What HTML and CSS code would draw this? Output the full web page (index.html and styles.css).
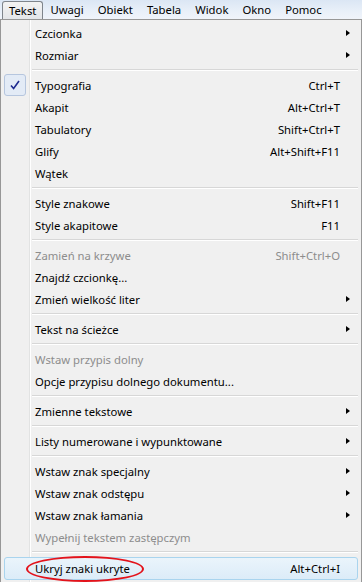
FILE: index.html
```html
<!DOCTYPE html>
<html lang="pl">
<head>
  <meta charset="UTF-8" />
  <meta name="viewport" content="width=device-width, initial-scale=1.0" />
  <title>Menu Tekst</title>
  <link rel="stylesheet" href="styles.css">
</head>
<body>
  <div class="menubar">
    <span class="top open">Tekst</span>
    <span class="top">Uwagi</span>
    <span class="top">Obiekt</span>
    <span class="top">Tabela</span>
    <span class="top">Widok</span>
    <span class="top">Okno</span>
    <span class="top">Pomoc</span>
  </div>

  <div class="menu">
    <div class="item"><span class="gut"></span><span class="label">Czcionka</span><span class="key"></span><span class="sub"></span></div>
    <div class="item"><span class="gut"></span><span class="label">Rozmiar</span><span class="key"></span><span class="sub"></span></div>
    <div class="sep"></div>

    <div class="item">
      <span class="gut"><span class="check"><svg width="12" height="12" viewBox="0 0 12 12"><path d="M2 6.5 L4.6 9.5 L10 2" fill="none" stroke="#1d2a8f" stroke-width="1.6"/></svg></span></span>
      <span class="label">Typografia</span><span class="key">Ctrl+T</span><span class="nosub"></span>
    </div>
    <div class="item"><span class="gut"></span><span class="label">Akapit</span><span class="key">Alt+Ctrl+T</span><span class="nosub"></span></div>
    <div class="item"><span class="gut"></span><span class="label">Tabulatory</span><span class="key">Shift+Ctrl+T</span><span class="nosub"></span></div>
    <div class="item"><span class="gut"></span><span class="label">Glify</span><span class="key">Alt+Shift+F11</span><span class="nosub"></span></div>
    <div class="item"><span class="gut"></span><span class="label">Wątek</span><span class="key"></span><span class="nosub"></span></div>
    <div class="sep"></div>

    <div class="item"><span class="gut"></span><span class="label">Style znakowe</span><span class="key">Shift+F11</span><span class="nosub"></span></div>
    <div class="item"><span class="gut"></span><span class="label">Style akapitowe</span><span class="key">F11</span><span class="nosub"></span></div>
    <div class="sep"></div>

    <div class="item off"><span class="gut"></span><span class="label">Zamień na krzywe</span><span class="key">Shift+Ctrl+O</span><span class="nosub"></span></div>
    <div class="item"><span class="gut"></span><span class="label">Znajdź czcionkę...</span><span class="key"></span><span class="nosub"></span></div>
    <div class="item"><span class="gut"></span><span class="label">Zmień wielkość liter</span><span class="key"></span><span class="sub"></span></div>
    <div class="sep"></div>

    <div class="item"><span class="gut"></span><span class="label">Tekst na ścieżce</span><span class="key"></span><span class="sub"></span></div>
    <div class="sep"></div>

    <div class="item off"><span class="gut"></span><span class="label">Wstaw przypis dolny</span><span class="key"></span><span class="nosub"></span></div>
    <div class="item"><span class="gut"></span><span class="label">Opcje przypisu dolnego dokumentu...</span><span class="key"></span><span class="nosub"></span></div>
    <div class="sep"></div>

    <div class="item"><span class="gut"></span><span class="label">Zmienne tekstowe</span><span class="key"></span><span class="sub"></span></div>
    <div class="sep"></div>

    <div class="item"><span class="gut"></span><span class="label">Listy numerowane i wypunktowane</span><span class="key"></span><span class="sub"></span></div>
    <div class="sep"></div>

    <div class="item"><span class="gut"></span><span class="label">Wstaw znak specjalny</span><span class="key"></span><span class="sub"></span></div>
    <div class="item"><span class="gut"></span><span class="label">Wstaw znak odstępu</span><span class="key"></span><span class="sub"></span></div>
    <div class="item"><span class="gut"></span><span class="label">Wstaw znak łamania</span><span class="key"></span><span class="sub"></span></div>
    <div class="item off"><span class="gut"></span><span class="label">Wypełnij tekstem zastępczym</span><span class="key"></span><span class="nosub"></span></div>
    <div class="sep"></div>

    <div class="item hot">
      <span class="gut"></span><span class="label">Ukryj znaki ukryte</span><span class="key">Alt+Ctrl+I</span><span class="nosub"></span>
      <span class="ring"></span>
    </div>
  </div>
</body>
</html>
```

FILE: styles.css
```css
body {
  margin: 0;
  background: #fff;
  font-family: 'Segoe UI', 'Noto Sans', sans-serif;
  font-size: 11.3px;
  color: #000;
  width: 362px;
  height: 582px;
  overflow: hidden;
}

.menubar {
  height: 19px;
  display: flex;
  align-items: stretch;
  padding-left: 2px;
  background: linear-gradient(#dbe6f4, #e9f0f9 60%, #f0f4fa);
}

.top {
  display: flex;
  align-items: center;
  padding: 0 6px;
  border: 1px solid transparent;
}

.top.open {
  border: 1px solid #7f858c;
  border-bottom: none;
  border-radius: 3px 3px 0 0;
  background: linear-gradient(#f3f3f3, #e4e6e9);
  margin-top: 1px;
}

.menu {
  position: relative;
  border: 1px solid #979797;
  border-bottom: none;
  padding: 2px 2px 0;
  background:
    linear-gradient(to right, #f0f0f0 28px, #e2e3e3 28px, #e2e3e3 29px, #fff 29px, #fff 30px, #f0f0f0 30px);
  height: 562px;
}

.item {
  position: relative;
  display: flex;
  align-items: center;
  height: 22px;
  white-space: nowrap;
}

.gut {
  width: 32px;
  flex: none;
  display: flex;
  align-items: center;
}

.check {
  width: 20px;
  height: 20px;
  margin-left: 1px;
  border: 1px solid #b6c6de;
  border-radius: 3px;
  background: #e3ebf6;
  display: flex;
  align-items: center;
  justify-content: center;
}

.label {
  flex: 1;
}

.key {
  text-align: right;
}

.sub, .nosub {
  width: 19px;
  flex: none;
  display: flex;
  align-items: center;
  justify-content: flex-start;
}

.sub::before {
  content: "";
  border-left: 4px solid #000;
  border-top: 3.5px solid transparent;
  border-bottom: 3.5px solid transparent;
  margin-left: 6px;
}

.off {
  color: #8d8d8d;
}

.sep {
  height: 8px;
  margin-left: 29px;
  margin-right: 1px;
  display: flex;
  align-items: center;
}

.sep::before {
  content: "";
  flex: 1;
  height: 1px;
  border-top: 1px solid #d7d7d7;
  background: #fff;
}

.hot {
  margin-top: 1px;
  height: 21px;
  border: 1px solid #a9d4ee;
  border-radius: 3px;
  background: linear-gradient(#eaf4fb, #dcecf8);
  margin-left: 1px;
  margin-right: 1px;
}

.hot .gut {
  width: 30px;
}

.hot .nosub {
  width: 17px;
}

.ring {
  position: absolute;
  left: 21px;
  top: -2px;
  width: 114px;
  height: 22px;
  border: 2px solid #e3131b;
  border-radius: 50%;
}
```
